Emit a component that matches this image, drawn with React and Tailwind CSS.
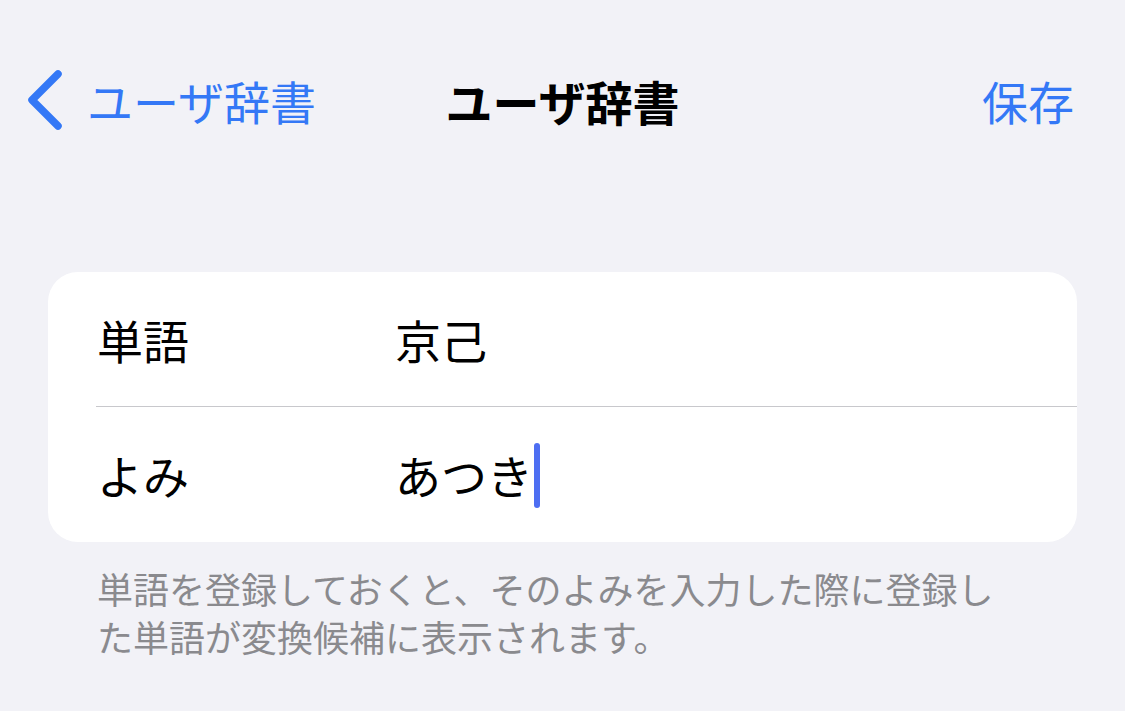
export default function App() {
  const font = { fontFamily: '"Noto Sans CJK JP", "Noto Sans", sans-serif' }

  return (
    <div className="w-[1125px] h-[711px] bg-[#f2f2f7] overflow-hidden" style={font}>
      {/* nav bar */}
      <div className="grid grid-cols-[1fr_auto_1fr] items-center h-[88px] mt-[56px]">
        <button className="flex items-center ml-[26px] text-[#3478f6] text-[46px] leading-none">
          <svg width="40" height="60" viewBox="0 0 40 60" className="mr-[21px]">
            <path d="M32 4 L6 30 L32 56" fill="none" stroke="#3478f6" strokeWidth="7.5" strokeLinecap="round" strokeLinejoin="round" />
          </svg>
          ユーザ辞書
        </button>
        <h1 className="text-[47px] font-bold text-black leading-none">ユーザ辞書</h1>
        <button className="justify-self-end mr-[51px] text-[#3478f6] text-[46px] leading-none">保存</button>
      </div>

      {/* form card */}
      <div className="mx-[48px] mt-[128px] bg-white rounded-[30px] overflow-hidden">
        <div className="flex items-center h-[134px] pl-[49px] text-[46px] text-black">
          <span className="w-[298px]">単語</span>
          <span>京己</span>
        </div>
        <div className="ml-[48px] h-px bg-[#c8c8cc]" />
        <div className="flex items-center h-[135px] pl-[49px] text-[46px] text-black">
          <span className="w-[298px]">よみ</span>
          <span className="flex items-center">
            あつき
            <span className="inline-block w-[6px] h-[65px] ml-[1px] mt-[2px] rounded-full bg-[#4d6ef2]" />
          </span>
        </div>
      </div>

      {/* footer note */}
      <p className="ml-[97px] mt-[22px] w-[920px] text-[36px] leading-[48px] text-[#8a8a8e]">
        単語を登録しておくと、そのよみを入力した際に登録した単語が変換候補に表示されます。
      </p>
    </div>
  )
}
